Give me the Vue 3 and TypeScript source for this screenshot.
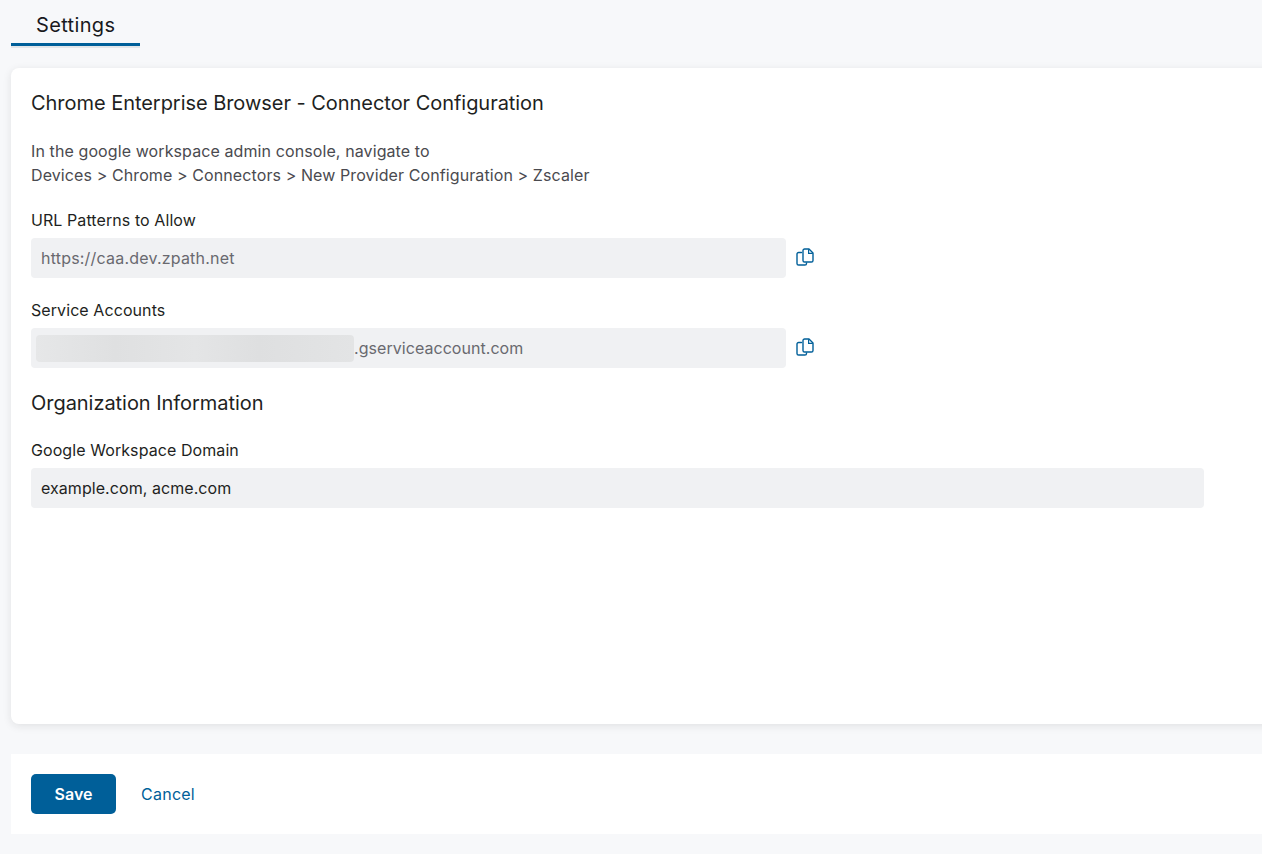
<script setup lang="ts">
const copyFields = [
  { label: 'URL Patterns to Allow', value: 'https://caa.dev.zpath.net', masked: false },
  { label: 'Service Accounts', value: '.gserviceaccount.com', masked: true },
]
</script>

<template>
  <div class="page">
    <div class="tabs">
      <div class="tab">Settings</div>
    </div>

    <div class="card">
      <h2 class="title">Chrome Enterprise Browser - Connector Configuration</h2>
      <p class="help">
        In the google workspace admin console, navigate to<br>
        Devices &gt; Chrome &gt; Connectors &gt; New Provider Configuration &gt; Zscaler
      </p>

      <div v-for="field in copyFields" :key="field.label" class="field">
        <div class="label">{{ field.label }}</div>
        <div class="row">
          <div class="input muted" :class="{ masked: field.masked }">
            <span v-if="field.masked" class="blur"></span>{{ field.value }}
          </div>
          <svg class="copy" width="20" height="20" viewBox="0 0 20 20" fill="none" aria-hidden="true">
            <path d="M6.5 5.5H3.6C2.7 5.5 2 6.2 2 7.1v9.3c0 .9.7 1.6 1.6 1.6h6.3c.9 0 1.6-.7 1.6-1.6V16" stroke="#005f99" stroke-width="1.4" stroke-linecap="round" />
            <path d="M8 3.6C8 2.7 8.7 2 9.6 2h4.4L18 6v7.4c0 .9-.7 1.6-1.6 1.6H9.6c-.9 0-1.6-.7-1.6-1.6V3.6Z" stroke="#005f99" stroke-width="1.4" stroke-linejoin="round" />
            <path d="M13.6 2.2v4.2h4.2" stroke="#005f99" stroke-width="1.2" />
          </svg>
        </div>
      </div>

      <h2 class="title org">Organization Information</h2>
      <div class="field">
        <div class="label">Google Workspace Domain</div>
        <div class="input wide">example.com, acme.com</div>
      </div>
    </div>

    <div class="footer">
      <button type="button" class="save">Save</button>
      <button type="button" class="cancel">Cancel</button>
    </div>
  </div>
</template>

<style scoped>
.page {
  height: 854px;
  padding-left: 11px;
  overflow: hidden;
  box-sizing: border-box;
  background: #f7f8fa;
  color: #1e1f22;
  font-family: Inter, "Liberation Sans", sans-serif;
}
.tabs {
  height: 48px;
}
.tab {
  width: 129px;
  height: 48px;
  box-sizing: border-box;
  padding: 12px 0 0 25px;
  border-bottom: 2px solid #e3e6e9;
  position: relative;
  font-size: 20px;
  line-height: 26px;
  letter-spacing: 0.35px;
  color: #19191d;
}
.tab::after {
  content: "";
  position: absolute;
  left: 0;
  right: 0;
  bottom: 0;
  height: 3px;
  background: #005f99;
}
.card {
  margin-top: 20px;
  width: 1270px;
  height: 656px;
  box-sizing: border-box;
  padding: 23px 20px 0;
  background: #fff;
  border-radius: 8px;
  box-shadow: 0 2px 8px rgba(25, 25, 29, 0.1);
}
.title {
  margin: 0;
  font-size: 20px;
  font-weight: 400;
  line-height: 24px;
  letter-spacing: -0.04px;
}
.help {
  margin: 24px 0 21px;
  font-size: 16px;
  line-height: 24px;
  letter-spacing: 0.1px;
  color: #4a4a4f;
}
.field {
  margin-top: 20px;
}
.label {
  font-size: 16px;
  line-height: 24px;
  letter-spacing: 0.08px;
}
.row {
  display: flex;
  align-items: center;
  gap: 9px;
  margin-top: 6px;
}
.input {
  height: 40px;
  box-sizing: border-box;
  padding: 0 10px;
  display: flex;
  align-items: center;
  background: #f0f1f3;
  border-radius: 4px;
  font-size: 16px;
  letter-spacing: 0.06px;
}
.row .input {
  width: 755px;
}
.wide {
  width: 1173px;
  margin-top: 6px;
}
.muted {
  color: #69696f;
  letter-spacing: 0.2px;
}
.masked {
  padding-left: 5px;
  letter-spacing: 0.05px;
}
.blur {
  width: 318px;
  height: 27px;
  margin-top: 1px;
  border-radius: 4px;
  background: linear-gradient(90deg, #e6e7e8, #dfe0e1 25%, #e4e5e6 50%, #dedfe0 70%, #e3e4e5);
}
.copy {
  margin-top: -2px;
}
.org {
  margin-top: 23px;
}
.org + .field {
  margin-top: 23px;
}
.footer {
  margin-top: 30px;
  width: 1270px;
  height: 80px;
  box-sizing: border-box;
  padding: 20px;
  display: flex;
  align-items: center;
  gap: 25px;
  background: #fff;
}
.save {
  width: 85px;
  height: 40px;
  border: 0;
  border-radius: 5px;
  background: #005f99;
  color: #fff;
  font: 600 16px Inter, "Liberation Sans", sans-serif;
}
.cancel {
  padding: 0;
  border: 0;
  background: none;
  color: #005f99;
  font: 400 16px Inter, "Liberation Sans", sans-serif;
  letter-spacing: 0.25px;
}
</style>

<style>
body {
  background: #f7f8fa;
}
</style>
